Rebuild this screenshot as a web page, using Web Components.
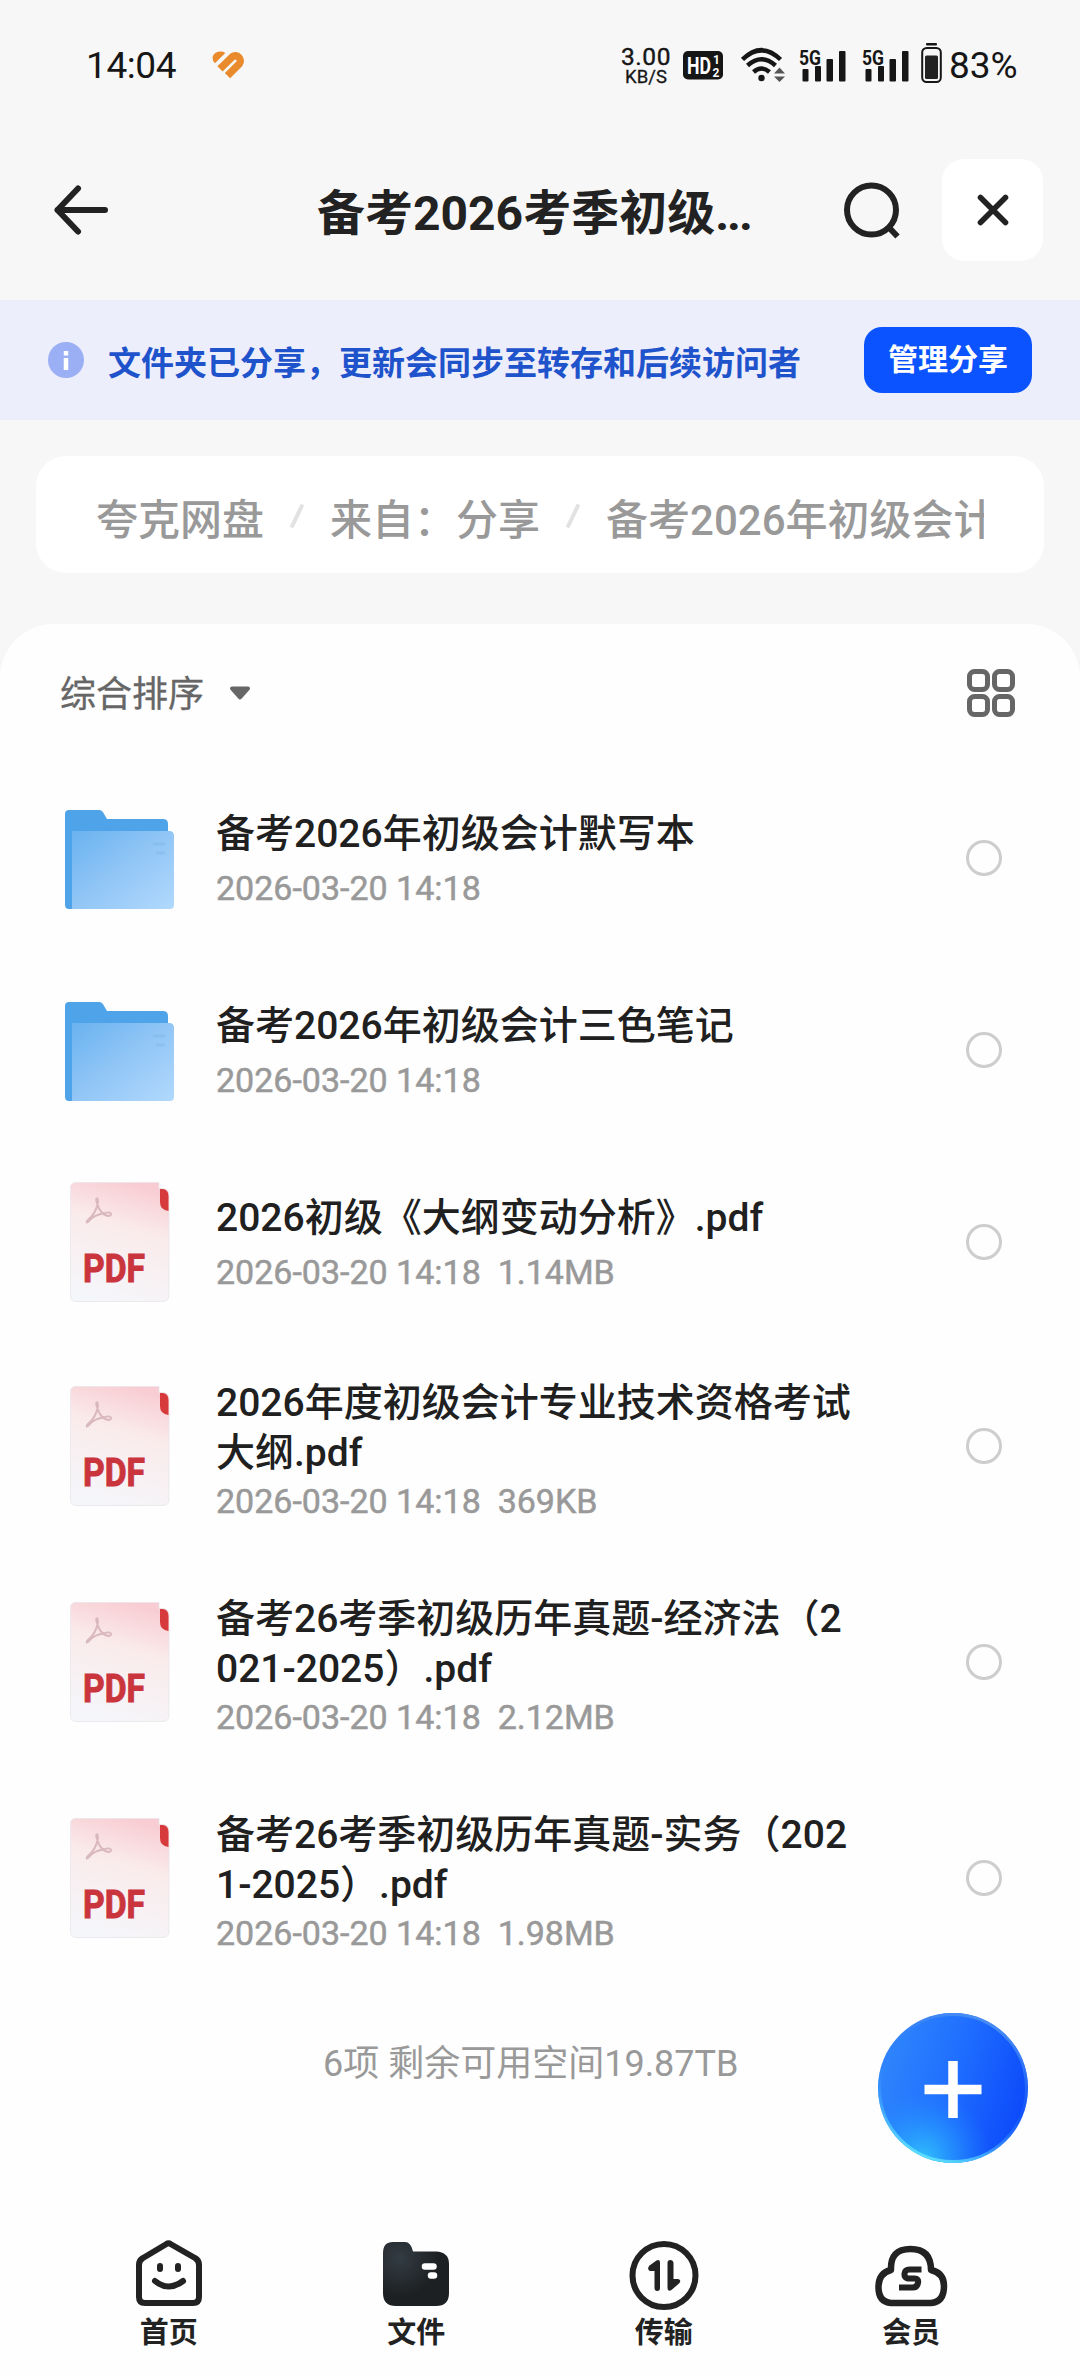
<!DOCTYPE html>
<html lang="zh-CN">
<head>
<meta charset="utf-8">
<title>备考2026考季初级</title>
<style>
html,body{margin:0;padding:0}
body{width:1080px;height:2376px;overflow:hidden;background:#f7f7f7;color:#222;font-family:Roboto,"Noto Sans CJK SC",sans-serif;text-spacing-trim:space-all;-webkit-font-smoothing:antialiased}
</style>
</head>
<body>
<drive-app></drive-app>
<script>
const define = (name, html) => {
  const t = document.createElement('template');
  t.innerHTML = '<style>*{box-sizing:border-box}svg{display:block;flex:none}</style>' + html;
  customElements.define(name, class extends HTMLElement {
    constructor() {
      super();
      this.attachShadow({mode: 'open'}).appendChild(t.content.cloneNode(true));
    }
  });
};

define('signal-bars', `
<style>:host{display:block}</style>
<svg width="48" height="36" viewBox="0 0 48 36" fill="#161616">
  <text x="0" y="17.5" font-size="21" font-weight="700" textLength="22" lengthAdjust="spacingAndGlyphs">5G</text>
  <rect x="3.5" y="22" width="6" height="12.5" rx="1"/><rect x="16" y="19" width="6" height="15.5" rx="1"/>
  <rect x="27.500" y="12" width="6.500" height="22.500" rx="1"/><rect x="40" y="4" width="6.500" height="30.500" rx="1"/>
</svg>`);

define('status-bar', `
<style>
:host{display:flex;height:120px;padding:10px 61px 0 86px;align-items:center;color:#161616}
.time{font-size:37px;letter-spacing:-.4px;width:126px}
.sp{flex:1}
.speed{display:flex;flex-direction:column;align-items:center;width:52px;margin-right:11px}
.speed b{font-weight:400;font-size:24.500px;line-height:23px;letter-spacing:.6px;-webkit-text-stroke:.4px #161616}
.speed i{font-style:normal;font-size:18.500px;line-height:18px;-webkit-text-stroke:.3px #161616}
.hd{margin-right:18px}.wifi{margin-right:13px}
signal-bars{margin-right:15px}
signal-bars.last{margin-right:11px}
.bat{margin:-5px 7px 0 0}
.pct{font-size:37px;letter-spacing:0;width:70px;white-space:nowrap}
</style>
<span class="time">14:04</span>
<svg width="34" height="30" viewBox="0 0 34 30"><path d="M3 13.300Q-.5 9.500 1 5.800Q3 2 7.500 1.600Q11 1.300 13.300 3Z" fill="#e98a2c"/><path d="M8 18.800L20.300 6.800A5 5 0 0 1 27.300 13.800L15.500 25.600" fill="none" stroke="#e98a2c" stroke-width="7.400" stroke-linejoin="round"/></svg>
<span class="sp"></span>
<div class="speed"><b>3.00</b><i>KB/S</i></div>
<svg class="hd" width="40" height="30" viewBox="0 0 40 30"><rect y="1" width="40" height="28.500" rx="5" fill="#161616"/>
<g fill="#fff" font-weight="700"><text x="4" y="23.500" font-size="23" textLength="24" lengthAdjust="spacingAndGlyphs">HD</text><text x="30" y="13.500" font-size="12">1</text><text x="29.500" y="26.500" font-size="12">2</text></g></svg>
<svg class="wifi" width="45" height="36" viewBox="0 0 45 36"><g fill="none" stroke="#161616" stroke-width="4.500"><path d="M1.500 12.500Q20.500 -6 39.500 12.500"/><path d="M6.500 18.500Q20.500 6 34.500 18.500"/><path d="M12.500 25Q20.500 18 28.500 25"/></g><circle cx="20.500" cy="31" r="3.200" fill="#161616"/><path d="M33 26.500l5.500-6 5.500 6zM33 29.500l5.500 5.500 5.500-5.500z" fill="#555"/></svg>
<signal-bars></signal-bars><signal-bars class="last"></signal-bars>
<svg class="bat" width="21" height="42" viewBox="0 0 21 42"><rect x="5" y="1" width="11" height="2.500" rx="1" fill="#161616"/><rect x="1.200" y="6" width="18.600" height="34" rx="4.500" fill="none" stroke="#161616" stroke-width="2"/><rect x="4" y="13.500" width="13" height="23.500" rx="1.500" fill="#222"/></svg>
<span class="pct">83%</span>`);

define('title-bar', `
<style>
:host{display:flex;height:180px;padding:0 37px 0 51px;align-items:center;color:#222}
h1{margin:0 0 0 auto;font-size:48px;font-weight:700;line-height:64px;width:436px;white-space:nowrap;padding-top:8px}
h1 span{letter-spacing:-2px}
.find{margin-left:89px}
.close{margin-left:40px;width:101px;height:102px;border-radius:22px;background:#fff;display:flex;align-items:center;justify-content:center}
</style>
<svg width="60" height="60" viewBox="0 0 60 60" fill="none" stroke="#222" stroke-width="6" stroke-linecap="round" stroke-linejoin="round"><path d="M27 8.500L6.500 30 27 51.500M6.500 30H54"/></svg>
<h1>备考2026考季初级<span>...</span></h1>
<svg class="find" width="60" height="60" viewBox="0 0 60 60" fill="none" stroke="#222" stroke-width="6"><circle cx="29.500" cy="30" r="24.500"/><path d="M45.500 46L55.500 56.500"/></svg>
<div class="close"><svg width="34" height="34" viewBox="0 0 34 34" stroke="#222" stroke-width="5.600" stroke-linecap="round"><path d="M4.500 4.500L29.500 29.500M29.500 4.500L4.500 29.500"/></svg></div>`);

define('share-banner', `
<style>
:host{display:flex;height:120px;padding:0 48px;align-items:center;background:#edeefb}
p{margin:7px 0 0 24px;font-size:33px;line-height:44px;font-weight:700;color:#1e53cb;white-space:nowrap;flex:1}
button{all:unset;box-sizing:border-box;width:168px;height:66px;border-radius:18px;background:#0b53ff;color:#fff;font:700 30px/62px Roboto,"Noto Sans CJK SC",sans-serif;text-align:center}
</style>
<svg width="36" height="36" viewBox="0 0 36 36"><circle cx="18" cy="18" r="18" fill="#9aaff4"/><path d="M18 9v4.500M18 16v12" stroke="#fff" stroke-width="4.500"/></svg>
<p>文件夹已分享，更新会同步至转存和后续访问者</p>
<button>管理分享</button>`);

define('path-crumbs', `
<style>
:host{display:block;margin:36px 36px 51px;height:117px;border-radius:30px;background:#fff;padding:0 60px}
div{display:flex;align-items:center;height:100%;overflow:hidden;white-space:nowrap;font-size:42px;font-weight:500;color:#999;line-height:60px}
span{flex:none;padding-top:13px}
svg{margin:3px 25px 0}
</style>
<div><span>夸克网盘</span>
<svg width="16" height="28" viewBox="0 0 16 28"><path d="M2.500 25.500L13.500 2.500" stroke="#e2e2e2" stroke-width="4"/></svg>
<span>来自：分享</span>
<svg width="16" height="28" viewBox="0 0 16 28"><path d="M2.500 25.500L13.500 2.500" stroke="#e2e2e2" stroke-width="4"/></svg>
<span>备考2026年初级会计</span></div>`);

define('sort-bar', `
<style>
:host{display:flex;height:138px;padding:0 64px 0 60px;align-items:center;justify-content:space-between}
div{display:flex;align-items:center;gap:25px;font-size:36px;line-height:48px;color:#666}
span{padding-top:3px;-webkit-text-stroke:.3px #666}
</style>
<div><span>综合排序</span><svg width="22" height="16" viewBox="0 0 22 16"><path d="M3 3.500H19L11 12.500Z" fill="#666" stroke="#666" stroke-width="4" stroke-linejoin="round"/></svg></div>
<svg width="50" height="50" viewBox="0 0 50 50" fill="none" stroke="#666" stroke-width="5"><rect x="3.500" y="3.500" width="18" height="18" rx="5"/><rect x="28.500" y="3.500" width="18" height="18" rx="5"/><rect x="3.500" y="28.500" width="18" height="18" rx="5"/><rect x="28.500" y="28.500" width="18" height="18" rx="5"/></svg>`);

define('folder-icon', `
<style>:host{display:block;padding-top:3px}</style>
<svg width="110" height="100" viewBox="0 0 110 100"><defs>
<linearGradient id="a" x1="0" y1="0" x2="1" y2="1"><stop stop-color="#69b2f0"/><stop offset=".5" stop-color="#92c6f6"/><stop offset="1" stop-color="#b1d9fd"/></linearGradient></defs>
<path d="M4 0H34Q37 0 38.500 3L42 9H98Q103 9 103 14V60L8 99H4Q0 99 0 95V4Q0 0 4 0Z" fill="#4fa3e8"/>
<path d="M7 21H104Q109 21 109 26V95Q109 99 105 99H7Z" fill="url(#a)"/>
<path d="M88 34h12M91 43h9" stroke="#7db4e8" stroke-width="3" opacity=".4"/></svg>`);

define('pdf-icon', `
<style>:host{display:block;padding-left:5px}</style>
<svg width="100" height="120" viewBox="0 0 100 120"><defs>
<linearGradient id="p" x1=".65" y1="0" x2=".4" y2="1"><stop stop-color="#f8ccd2"/><stop offset=".38" stop-color="#faebeb"/><stop offset="1" stop-color="#f5f6fa"/></linearGradient></defs>
<path d="M6 .5H89V6.500H93Q99 7 99 13V113Q99 119.500 93 119.500H6Q.5 119.500 .5 113V6Q.5 .5 6 .5Z" fill="url(#p)" stroke="#e9e6ea" stroke-width=".8"/>
<path d="M90 7H93Q98.500 8 98.500 14V29Q90 28 90 20Z" fill="#d73a3a"/>
<path d="M17 39C23 34 27 27 28 20C28 14 25 16 27 21C29 29 34 34 39 34C43 33 41 29 35 31C29 32 22 35 19 39Q16 42 17 39Z" fill="none" stroke="#d9b9bf" stroke-width="2"/>
<text x="13" y="100" font-size="39" font-weight="700" fill="#ca353d" stroke="#ca353d" textLength="62" lengthAdjust="spacingAndGlyphs">PDF</text></svg>`);

customElements.define('file-row', class extends HTMLElement {
  connectedCallback() {
    const two = this.hasAttribute('tall');
    const root = this.attachShadow({mode: 'open'});
    root.innerHTML = `
<style>
:host{display:flex;align-items:center;height:${two ? 216 : 192}px;padding:0 78px 0 65px}
.ic{width:151px;flex:none}
.tx{width:642px;padding-top:${two ? 7 : 2}px}
.name{font-size:39px;line-height:50.500px;font-weight:500;color:#202020;word-break:break-all}
.meta{font-size:34px;font-weight:400;line-height:42px;color:#999;-webkit-text-stroke:.5px #999;white-space:pre;margin-top:${two ? 1 : 8}px}
.dot{width:36px;height:36px;border:3.500px solid #cdcdcd;border-radius:50%;margin-left:auto;box-sizing:border-box}
</style>
<div class="ic"><${this.getAttribute('type')}-icon></${this.getAttribute('type')}-icon></div>
<div class="tx"><div class="name"><slot></slot></div><div class="meta"></div></div>
<div class="dot"></div>`;
    root.querySelector('.meta').textContent = this.getAttribute('meta');
  }
});

define('add-button', `
<style>:host{display:block;position:absolute;left:875px;top:2010px}</style>
<svg width="156" height="156" viewBox="0 0 156 156"><defs>
<linearGradient id="f" x1="0" y1=".35" x2="1" y2=".65"><stop stop-color="#2f86fb"/><stop offset=".5" stop-color="#1f6dff"/><stop offset="1" stop-color="#0b48fa"/></linearGradient>
<radialGradient id="g" cx=".3" cy=".97" r=".45"><stop stop-color="#2fc0fb"/><stop offset="1" stop-color="#2390ff" stop-opacity="0"/></radialGradient>
<linearGradient id="e" x1=".7" y1="0" x2=".3" y2="1"><stop stop-color="#4b8ff0"/><stop offset=".5" stop-color="#2d78fb" stop-opacity=".2"/><stop offset="1" stop-color="#5fe6ff"/></linearGradient></defs>
<circle cx="78" cy="78" r="75" fill="url(#f)"/><circle cx="78" cy="78" r="75" fill="url(#g)"/><circle cx="78" cy="78" r="73.500" fill="none" stroke="url(#e)" stroke-width="3"/>
<path d="M78 51v57M49.500 79.500h57" stroke="#fff" stroke-width="9.500"/></svg>`);

define('nav-item', `
<style>
:host{flex:1;display:flex;flex-direction:column;align-items:center;font-size:29px;line-height:40px;font-weight:700;color:#222}
.i{height:75px}
</style><div class="i"><slot name="icon"></slot></div><slot></slot>`);

define('bottom-nav', `
<style>:host{display:flex;margin-top:auto;height:138px;padding:0 45px}</style>
<nav-item><svg slot="icon" width="74" height="72" viewBox="0 0 74 72" fill="none" stroke="#222" stroke-width="6" stroke-linejoin="round" stroke-linecap="round"><path d="M34.500 6Q36.500 4.500 38.500 6L63 20Q67 22 67 27V59Q67 65 61 65H13Q7 65 7 59V27Q7 22 11 20Z"/><path d="M28 28v3M46 28v3M23 43Q36.500 54 51 43"/></svg>首页</nav-item>
<nav-item><svg slot="icon" width="74" height="72" viewBox="0 0 74 72"><defs><radialGradient id="n" cx=".25" cy=".25" r=".6"><stop stop-color="#333c44"/><stop offset="1" stop-color="#1d2022"/></radialGradient></defs><path d="M14 4H26Q32 4 34 13.500H57Q70 14 70 26V55Q70 68 57 68H17Q4 68 4 55V15Q4 4 14 4Z" fill="url(#n)"/><path d="M46 28.500h8.500M52 37.500h3" stroke="#fff" stroke-width="6.500" stroke-linecap="round"/></svg>文件</nav-item>
<nav-item><svg slot="icon" width="74" height="74" viewBox="0 0 74 74"><circle cx="37" cy="37.500" r="31.500" fill="none" stroke="#222" stroke-width="6"/><path d="M22.500 27.500L29.500 22.500Q33 21 33 25V50Q33 53 30.300 53T27.500 50V33H23Q19.500 31 22.500 27.500ZM40.500 25Q40.500 22 43.300 22T46.500 25V41H51Q55 42 52 45.500L44.500 52Q40.500 54 40.500 50Z" fill="#222"/></svg>传输</nav-item>
<nav-item><svg slot="icon" width="78" height="72" viewBox="0 0 78 72" fill="none" stroke="#222"><path d="M19 65Q6 64 6.500 48Q7 35 19 32Q18 11 38.500 11Q59 11 59 32Q72 35 72 48Q72 64 59 65Z" stroke-width="6.500" stroke-linejoin="round"/><path d="M49.500 31.500H37.500Q33 31.500 32.500 35.500T36 40.500H42.500Q47 40.500 46 45T41 49.500H27" stroke-width="6"/></svg>会员</nav-item>`);

define('file-panel', `
<style>
:host{display:flex;flex-direction:column;flex:1;background:#fefefe;border-radius:54px 54px 0 0}
footer{height:154px;font-size:36px;line-height:156px;color:#999;padding-left:323px}
</style>
<sort-bar></sort-bar>
<file-row type="folder" meta="2026-03-20 14:18">备考2026年初级会计默写本</file-row>
<file-row type="folder" meta="2026-03-20 14:18">备考2026年初级会计三色笔记</file-row>
<file-row type="pdf" meta="2026-03-20 14:18  1.14MB">2026初级《大纲变动分析》.pdf</file-row>
<file-row tall type="pdf" meta="2026-03-20 14:18  369KB">2026年度初级会计专业技术资格考试大纲.pdf</file-row>
<file-row tall type="pdf" meta="2026-03-20 14:18  2.12MB">备考26考季初级历年真题-经济法（2021-2025）.pdf</file-row>
<file-row tall type="pdf" meta="2026-03-20 14:18  1.98MB">备考26考季初级历年真题-实务（2021-2025）.pdf</file-row>
<footer>6项 剩余可用空间19.87TB</footer>
<bottom-nav></bottom-nav>`);

define('drive-app', `
<style>:host{display:flex;flex-direction:column;width:1080px;height:2376px;position:relative}</style>
<status-bar></status-bar><title-bar></title-bar><share-banner></share-banner><path-crumbs></path-crumbs><file-panel></file-panel><add-button></add-button>`);
</script>
</body>
</html>
